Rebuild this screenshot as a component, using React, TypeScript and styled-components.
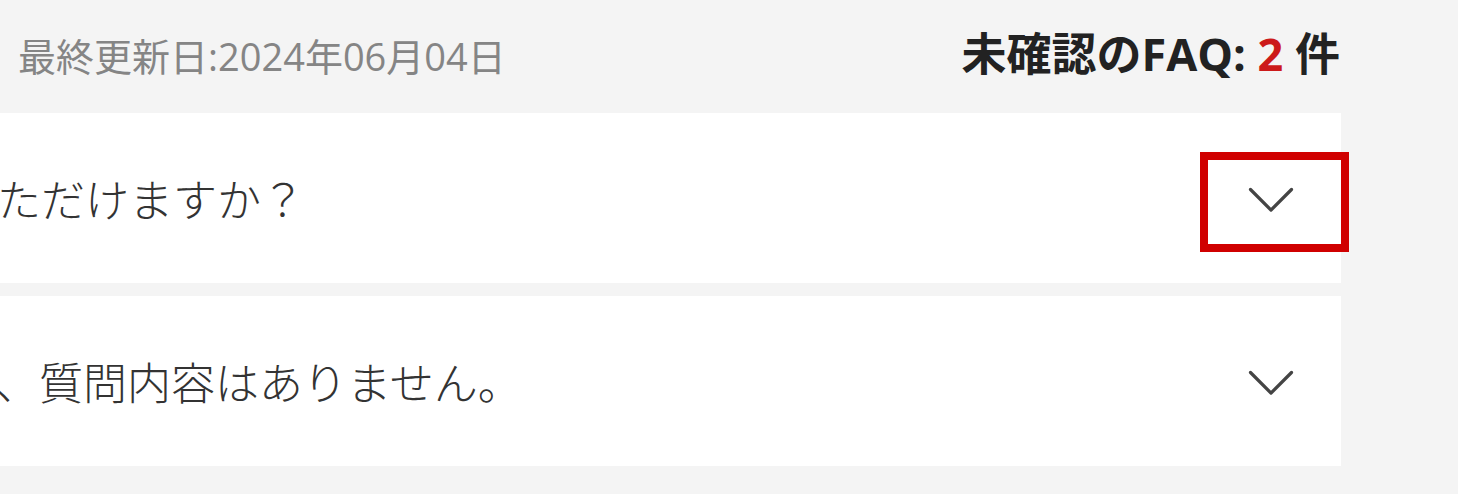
import React from "react";
import styled, { createGlobalStyle } from "styled-components";

const GlobalStyle = createGlobalStyle`
  html, body {
    margin: 0;
    padding: 0;
    background: #f4f4f4;
    overflow: hidden;
  }
  body {
    font-family: "Open Sans", "Noto Sans CJK JP", sans-serif;
  }
`;

const Page = styled.div`
  width: 1458px;
  height: 494px;
  padding-right: 117px;
  box-sizing: border-box;
  background: #f4f4f4;
`;

const Header = styled.div`
  display: flex;
  justify-content: space-between;
  align-items: baseline;
  height: 113px;
  padding: 32px 1px 0 18px;
  box-sizing: border-box;
`;

const Updated = styled.div`
  font-size: 38px;
  line-height: 44px;
  color: #858585;
`;

const Unread = styled.div`
  font-size: 45px;
  line-height: 44px;
  font-weight: 700;
  color: #222;
`;

const Count = styled.span`
  color: #cc1a1a;
`;

const List = styled.div`
  display: flex;
  flex-direction: column;
  gap: 13px;
`;

const Card = styled.div`
  display: flex;
  align-items: center;
  justify-content: space-between;
  height: 170px;
  background: #fff;
`;

const Question = styled.div<{ $shift: number }>`
  margin-left: ${(p) => p.$shift}px;
  font-family: "Noto Sans CJK JP", sans-serif;
  font-size: 44px;
  font-weight: 300;
  line-height: 60px;
  color: #333;
  white-space: nowrap;
`;

const Toggle = styled.button<{ $focused?: boolean }>`
  display: flex;
  align-items: center;
  justify-content: center;
  width: 133px;
  height: 84px;
  margin-top: 8px;
  padding: 0 8px 5px 0;
  border: 0;
  background: transparent;
  box-sizing: border-box;
  outline: ${(p) => (p.$focused ? "8px solid #d00000" : "none")};
  cursor: pointer;
`;

const Chevron = () => (
  <svg width="46" height="26" viewBox="0 0 46 26" fill="none">
    <polyline
      points="2.5,2.5 23,23 43.5,2.5"
      stroke="#444"
      strokeWidth="3.2"
      strokeLinecap="round"
      strokeLinejoin="round"
    />
  </svg>
);

const faqs = [
  { id: 1, text: "ただけますか？", shift: -3, focused: true },
  { id: 2, text: "、質問内容はありません。", shift: -5, focused: false },
];

export default function App() {
  return (
    <Page>
      <GlobalStyle />
      <Header>
        <Updated>最終更新日:2024年06月04日</Updated>
        <Unread>
          未確認のFAQ: <Count>2</Count> 件
        </Unread>
      </Header>
      <List>
        {faqs.map((f) => (
          <Card key={f.id}>
            <Question $shift={f.shift}>{f.text}</Question>
            <Toggle $focused={f.focused} aria-label="開く">
              <Chevron />
            </Toggle>
          </Card>
        ))}
      </List>
    </Page>
  );
}
